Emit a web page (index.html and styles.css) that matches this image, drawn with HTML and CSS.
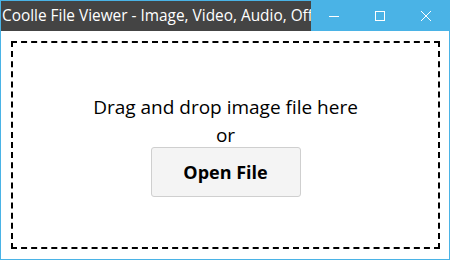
FILE: index.html
```html
<html>
<head>
    <title>Coolle File Viewer</title>
    <link rel="stylesheet" href="styles.css">
</head>
<body>
    <div class="window">
        <div class="titlebar">
            <div class="title">Coolle File Viewer - Image, Video, Audio, Office, PDF, Text Viewer</div>
            <div class="controls">
                <svg class="ctl" width="46" height="30" viewBox="0 0 46 30"><path d="M18 15.5h10" stroke="#fff" stroke-width="1"/></svg>
                <svg class="ctl" width="46" height="30" viewBox="0 0 46 30"><rect x="18.5" y="10.5" width="9" height="9" fill="none" stroke="#fff" stroke-width="1"/></svg>
                <svg class="ctl" width="46" height="30" viewBox="0 0 46 30"><path d="M18 10l10 10M28 10l-10 10" stroke="#fff" stroke-width="1"/></svg>
            </div>
        </div>
        <div class="content">
            <div class="dropzone">
                <div class="hint">Drag and drop image file here</div>
                <div class="hint">or</div>
                <button class="open">Open File</button>
            </div>
        </div>
    </div>
</body>
</html>
```

FILE: styles.css
```css
html, body {
    margin: 0;
    padding: 0;
}

body {
    width: 450px;
    height: 260px;
    font-family: "Open Sans", "Noto Sans", sans-serif;
}

.window {
    box-sizing: border-box;
    width: 450px;
    height: 260px;
    border: 1px solid #4ab3e6;
    display: flex;
    flex-direction: column;
    background: white;
}

.titlebar {
    height: 30px;
    display: flex;
}

.title {
    flex: 1;
    background: #444444;
    color: white;
    font-size: 15.4px;
    line-height: 30px;
    padding-left: 1px;
    white-space: nowrap;
    overflow: hidden;
}

.controls {
    width: 138px;
    background: #4ab3e6;
    display: flex;
}

.ctl {
    display: block;
}

.content {
    flex: 1;
    padding: 10px 9px 10px 10px;
    display: flex;
}

.dropzone {
    flex: 1;
    border: 2px dashed black;
    display: flex;
    flex-direction: column;
    align-items: center;
    justify-content: center;
}

.hint {
    font-size: 19px;
    line-height: 28px;
    color: black;
}

.open {
    margin-top: -2px;
    width: 150px;
    height: 50px;
    background: #f4f4f4;
    border: 1px solid #cfcfcf;
    border-radius: 3px;
    font-family: inherit;
    font-size: 18px;
    font-weight: bold;
    color: black;
}
```
